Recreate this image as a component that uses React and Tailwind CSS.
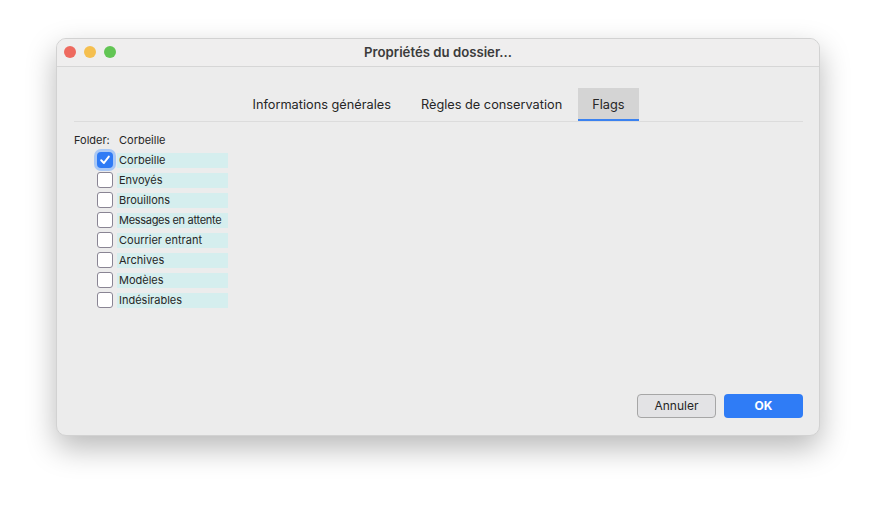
import React from "react";

const folders = [
  ["Corbeille", true],
  ["Envoyés", false],
  ["Brouillons", false],
  ["Messages en attente", false],
  ["Courrier entrant", false],
  ["Archives", false],
  ["Modèles", false],
  ["Indésirables", false],
];

function Checkbox({ checked }) {
  if (checked) {
    return (
      <div className="w-[16px] h-[16px] rounded-[4px] bg-[#2f7bf5] flex items-center justify-center ring-[3px] ring-[#a9c8f5]">
        <svg width="12" height="12" viewBox="0 0 12 12">
          <path d="M2.2 6.3 L4.9 9 L9.8 2.6" fill="none" stroke="white" strokeWidth="2" strokeLinecap="round" strokeLinejoin="round" />
        </svg>
      </div>
    );
  }
  return <div className="w-[16px] h-[16px] rounded-[3px] bg-white border-[1.5px] border-[#8a8594]" />;
}

export default function App() {
  return (
    <div className="w-[877px] h-[510px] bg-white pt-[38px] pl-[56px]" style={{ fontFamily: 'Inter, "Liberation Sans", Arial, sans-serif' }}>
      <div className="w-[764px] h-[398px] rounded-[10px] bg-[#ececec] border border-[#d2d2d2] shadow-[0_12px_30px_rgba(0,0,0,0.28)] flex flex-col overflow-hidden">
        <div className="h-[28px] shrink-0 bg-[#efeeee] border-b border-[#d6d6d6] relative flex items-center justify-center">
          <div className="absolute left-[7px] top-[7px] flex gap-[8px]">
            <div className="w-[12px] h-[12px] rounded-full bg-[#ee6a5f]" />
            <div className="w-[12px] h-[12px] rounded-full bg-[#f5bf4f]" />
            <div className="w-[12px] h-[12px] rounded-full bg-[#62c554]" />
          </div>
          <span className="text-[13.2px] font-semibold text-[#3b3b3b]">Propriétés du dossier...</span>
        </div>
        <div className="flex-1 flex flex-col pl-[17px] pr-[16px] pt-[21px]">
          <div className="flex justify-center gap-[2px] border-b border-[#dcdcdc]">
            <div className="h-[33px] px-[14px] flex items-center text-[12.75px] text-[#262626]">Informations générales</div>
            <div className="h-[33px] px-[14px] flex items-center text-[12.75px] text-[#262626]">Règles de conservation</div>
            <div className="h-[33px] px-[14px] flex items-center text-[12.75px] text-[#262626] bg-[#d4d4d4] border-b-[2px] border-[#3b82f0] pt-[2px]">Flags</div>
          </div>
          <div className="flex items-center h-[18px] mt-[9px] text-[11px] text-[#262626]">
            <span className="w-[45px]">Folder:</span>
            <span>Corbeille</span>
          </div>
          <div className="flex flex-col gap-[4px] mt-[3px] pl-[23px]">
            {folders.map(([name, checked]) => (
              <div key={name} className="flex items-center h-[16px] gap-[4px]">
                <Checkbox checked={checked} />
                <div className={"w-[111px] h-[15px] bg-[#d5eeee] text-[11px] text-[#262626] flex items-center pl-[2px] whitespace-nowrap overflow-hidden " + (name === "Messages en attente" ? "tracking-[-0.3px]" : "")}>{name}</div>
              </div>
            ))}
          </div>
          <div className="flex-1" />
          <div className="flex justify-end gap-[8px] pb-[17px]">
            <button className="w-[79px] h-[24px] rounded-[4px] bg-[#e3e3e5] border border-[#a6a6a6] text-[12px] text-[#262626]">Annuler</button>
            <button className="w-[79px] h-[24px] rounded-[4px] bg-[#2f7cf6] text-[12px] font-bold text-white">OK</button>
          </div>
        </div>
      </div>
    </div>
  );
}
